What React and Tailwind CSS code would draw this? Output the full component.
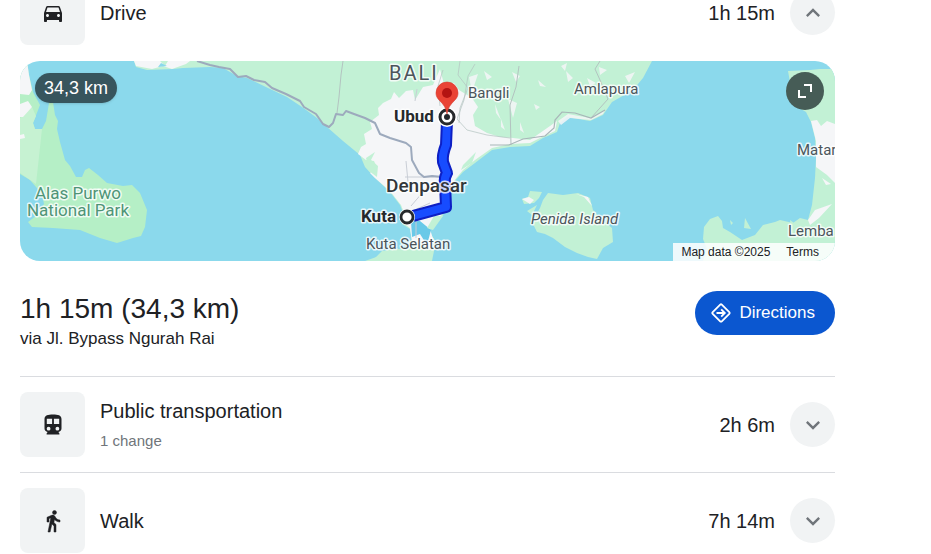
import React, { useState } from "react";
import { MdDirectionsCar, MdExpandLess, MdExpandMore } from "react-icons/md";

const WATER = "#8bd9ec";
const GREEN = "#c2f1d5";
const PARK = "#b5efc6";
const TOWN = "#f5f6f8";

// ─── Map labels ───────────────────────────────────────────────────────────────
const LABELS = [
  { text: "Bangli", x: 448, y: 37, className: "text-[15px] fill-[#4b555b]" },
  { text: "Amlapura", x: 554, y: 33, className: "text-[15px] fill-[#4b555b]" },
  { text: "Kuta Selatan", x: 346, y: 188, className: "text-[15px] fill-[#4b555b]" },
  { text: "Matar", x: 777, y: 94, className: "text-[15px] fill-[#4b555b]" },
  { text: "Lemba", x: 768, y: 175, className: "text-[15px] fill-[#4b555b]" },
  { text: "Penida Island", x: 511, y: 163, className: "text-[15px] italic fill-[#4b555b]" },
  { text: "BALI", x: 369, y: 19, className: "text-[20px] tracking-widest fill-[#4b555b]" },
  { text: "Denpasar", x: 366, y: 131, className: "text-[19px] font-medium fill-[#33373b]" },
  { text: "Ubud", x: 374, y: 61, className: "text-[17px] font-bold fill-[#26292c]" },
  { text: "Kuta", x: 341, y: 161, className: "text-[17px] font-bold fill-[#26292c]" },
];

const HALO = {
  stroke: "#ffffff",
  strokeOpacity: 0.8,
  strokeWidth: 3,
  strokeLinejoin: "round",
  paintOrder: "stroke",
};

const ROUTE = "M427 60 L426 84 Q422 94 423 101 L427 112 Q424 117 425 122 L426 146 L393 155";

// ─── Map drawing ──────────────────────────────────────────────────────────────
const RouteMap = () => (
  <svg
    viewBox="0 0 815 200"
    preserveAspectRatio="xMidYMid slice"
    role="img"
    aria-label="Route from Kuta to Ubud"
    className="block w-full h-[200px] font-[Roboto,sans-serif]"
  >
    <rect width="815" height="200" fill={WATER} />

    {/* Java, Alas Purwo */}
    <path
      d="M0 0H7L9 14L13 31L20 44L13 62L15 68L22 68L26 60L29 42L33 41L35 54L38 60L37 68L40 81L45 99L50 105L56 116L62 116L65 109L69 107L78 114L87 122L103 125L112 124L120 132L127 149L125 166L121 175L113 177L97 182L80 177L60 169L33 167L12 166L8 161L16 155L24 143L22 133L10 119L0 113Z"
      fill={PARK}
    />
    <path d="M0 57L12 46L16 55L13 62L15 68L22 68L16 123L0 112Z" fill="#c6f2d2" />
    <path d="M0 0H7L9 14L12 29L9 34L0 33Z M0 43L8 40L12 46L3 56H0Z M0 74L4 73L5 77L0 78Z" fill={TOWN} />

    {/* Bali */}
    <path
      d="M114 0L116 6L127 9L153 8L163 7L190 6L203 7L217 15L227 17L248 27L267 36L282 46L297 57L307 66L323 80L340 94L345 106L355 117L370 131L380 144L385 157L382 163L390 168L392 181L385 187L372 189L362 194L345 200H412L414 190L415 180L408 168L422 156L428 144L433 122L443 111L455 102L472 89L490 86L510 85L523 77L537 71L540 62L547 56L570 60L583 54L592 41L613 29L623 17L632 0Z"
      fill={GREEN}
    />
    <path d="M114 0L116 5L132 8L143 5L152 8L166 3L170 0H148L145 5L140 0Z" fill={TOWN} />
    <path d="M141 2L147 5L138 6Z" fill={WATER} />
    <path
      d="M338 93L341 86L346 83L344 73L352 68L350 61L359 54L358 47L363 42L371 38L374 31L379 37L386 30L393 29L395 39L403 26L413 24L420 8L424 23L434 22L439 29L452 37L458 46L453 54L455 65L467 72L480 76L493 77L510 79L530 65L537 60L535 70L522 76L510 82L490 83L472 87L455 99L443 109L433 121L427 145L421 155L410 168L414 181L410 189L400 182L390 186L392 180L390 167L383 162L386 157L381 144L370 130L355 117L350 112L357 107L354 100L346 99Z"
      fill={TOWN}
    />
    <path d="M346 97L355 91L351 99L358 105L357 116L349 110Z M362 190L374 188L385 191L376 200H352Z M443 104L456 91L452 102L441 109Z M462 50L466 58L460 60Z" fill={GREEN} />
    <path d="M391 160L400 160L411 169L407 184L400 173L392 176Z" fill="#69c9e8" />
    <path d="M407 167L414 155L423 155L413 169Z" fill={GREEN} />
    <g fill={TOWN} opacity="0.85">
      <path d="M449 16L458 13L454 25L461 33L452 31Z M464 10L472 16L467 19Z M488 38L497 42L493 57Z M475 43L481 59L476 52Z M492 11L500 15L496 21Z M518 19L526 26L520 25Z M468 29L475 36L465 36Z M546 10L553 17L548 21Z M579 6L587 9L580 14Z M605 15L615 11L609 22Z M541 5L547 2L545 10Z M514 43L520 46L516 49Z M481 58L485 69L481 66Z M500 61L504 72L500 69Z M567 17L576 22L570 25Z" />
      <path d="M538 60L548 53L570 57L585 49L583 53L571 59L550 57L541 64Z" />
    </g>

    {/* minor roads */}
    <g fill="none" stroke="#b3c3c0" strokeWidth="1">
      <path d="M323 0L321 14L319 36L317 52" />
      <path d="M423 9L418 25L420 45M440 0L438 14L448 27L440 47L439 62" opacity="0.7" />
      <path d="M455 3L448 15L444 39L437 58L447 69L467 74L490 77" opacity="0.7" />
      <path d="M499 5L496 26L490 44L491 84" />
      <path d="M580 0L575 8L580 19L588 38L571 57" />
      <path d="M385 116H423M386 100L388 121M410 142L390 151M397 28L395 40" stroke="#c9ced6" />
      <path d="M391 145L409 124M396 160V177" stroke="#c9ced6" />
    </g>
    <path d="M470 84L489 84L503 78L525 75L534 67L535 59L542 51L555 52L571 57L585 49" fill="none" stroke="#a8b6b8" strokeWidth="1.2" />

    {/* coastal highway */}
    <path
      d="M177 0L190 4L199 6L210 8L218 16L226 15L234 19L245 21L252 27L266 33L280 40L284 46L296 53L303 63L309 66L313 62L316 53L323 54L326 50L334 53L345 57L355 62L360 73L370 77L386 82L391 86L392 99L399 112L404 116L412 115L423 116"
      fill="none"
      stroke="#9daabd"
      strokeWidth="2"
      strokeLinejoin="round"
    />

    {/* Penida Island */}
    <path d="M528 132L543 134L558 132L570 137L573 149L580 157L592 167L593 181L583 187L577 198L568 196L557 192L545 186L533 177L525 173L517 171L512 161L520 147L523 139Z" fill={GREEN} />
    <path d="M502 138L508 136L510 130L522 131L519 137L514 142L504 143Z M507 150L517 144L512 154Z" fill={GREEN} />
    <path d="M502 138L509 136L514 139L510 143Z M556 133L568 136L572 145L564 136Z" fill={TOWN} />

    {/* Lombok */}
    <path d="M768 10L790 9L800 8L815 8V200H683L687 188L683 178L684 166L690 158L698 155L702 160L703 167L710 171L722 179L735 174L743 164L755 161L760 159L773 162L780 157L788 159L792 144L795 117L796 97L795 77L791 61L786 51L774 44Z" fill={GREEN} />
    <path d="M791 60L797 59L801 65L807 60L815 63V122L807 114L796 106L796 80Z M788 159L795 149L812 143L799 157L790 164Z M802 117L811 123L806 124Z" fill={TOWN} />
    <path d="M725 157L731 168L724 167Z M710 159L713 162L711 164Z M770 159L774 162L771 170Z" fill={GREEN} />

    {/* route */}
    <g fill="none" strokeLinejoin="round">
      <path d={ROUTE} stroke="#0d1fc4" strokeWidth="12" />
      <path d={ROUTE} stroke="#174cff" strokeWidth="8" />
    </g>

    {LABELS.map((label) => (
      <text key={label.text} x={label.x} y={label.y} className={label.className} {...HALO}>
        {label.text}
      </text>
    ))}
    <text className="text-[17px] fill-[#4f9477]" textAnchor="middle" {...HALO}>
      <tspan x="58" y="138">Alas Purwo</tspan>
      <tspan x="58" y="155">National Park</tspan>
    </text>

    {/* stops */}
    <circle cx="387" cy="156" r="8" fill="#fff" />
    <circle cx="387" cy="156" r="6" fill="#fff" stroke="#26292c" strokeWidth="2.8" />
    <circle cx="427" cy="56" r="10" fill="#fff" />
    <circle cx="427" cy="56" r="7" fill="#fff" stroke="#26292c" strokeWidth="3" />
    <circle cx="427" cy="56" r="3" fill="#26292c" />
    <path
      d="M427 53C426 47 424 44 420 40C417 37 416 35 416 32A11 11 0 0 1 438 32C438 35 437 37 434 40C430 44 428 47 427 53Z"
      fill="#ea4335"
      stroke="#d33b2e"
      strokeWidth="0.6"
    />
    <circle cx="427" cy="32" r="5" fill="#b31412" />
  </svg>
);

// ─── Icons ────────────────────────────────────────────────────────────────────
const TrainIcon = ({ className }) => (
  <svg viewBox="0 0 24 24" className={className} fill="currentColor" aria-hidden="true">
    <path
      fillRule="evenodd"
      d="M12 1.5C7 1.5 3.5 2.2 3.5 6V15.5C3.5 17.3 4.8 18.8 6.6 19L5.6 20.4V21.5H18.4V20.4L17.4 19C19.2 18.8 20.5 17.3 20.5 15.5V6C20.5 2.2 17 1.5 12 1.5ZM5.8 5.8H11.1V11H5.8ZM12.9 5.8H18.2V11H12.9ZM7.6 13.8A1.9 1.9 0 1 1 7.6 17.6A1.9 1.9 0 1 1 7.6 13.8ZM16.4 13.8A1.9 1.9 0 1 1 16.4 17.6A1.9 1.9 0 1 1 16.4 13.8Z"
    />
  </svg>
);

const WalkIcon = ({ className }) => (
  <svg viewBox="0 0 24 24" className={className} fill="currentColor" stroke="currentColor" strokeWidth="0.5" aria-hidden="true">
    <circle cx="13.5" cy="3.5" r="2" />
    <path d="M9.8 8.9L7 23h2.1l1.8-8 2.1 2v6h2v-7.5l-2.1-2 .6-3C14.8 12 16.8 13 19 13v-2c-1.9 0-3.5-1-4.3-2.4l-1-1.6c-.4-.6-1-1-1.7-1-.3 0-.5.1-.8.1L6 8.3V13h2V9.6l1.8-.7Z" />
  </svg>
);

const DirectionsIcon = () => (
  <svg viewBox="0 0 20 20" className="w-5 h-5" fill="none" stroke="currentColor" strokeWidth="1.8" aria-hidden="true">
    <path d="M9.2 1.7Q10 .9 10.8 1.7L18.3 9.2Q19.1 10 18.3 10.8L10.8 18.3Q10 19.1 9.2 18.3L1.7 10.8Q.9 10 1.7 9.2Z" strokeLinejoin="round" />
    <path d="M5.5 10H13.5M10.2 6.4L13.8 10L10.2 13.6" />
  </svg>
);

const ExpandIcon = () => (
  <svg viewBox="0 0 14 14" className="w-3.5 h-3.5" fill="none" stroke="currentColor" strokeWidth="2" aria-hidden="true">
    <path d="M6 1H13V8M1 6V13H8" />
  </svg>
);

// ─── One travel mode ──────────────────────────────────────────────────────────
const ModeRow = ({ icon: Icon, title, note, duration, open, onToggle }) => {
  const Chevron = open ? MdExpandLess : MdExpandMore;
  return (
    <div className="flex items-center gap-[15px]">
      <div className="flex items-center justify-center shrink-0 w-[65px] h-[65px] rounded-lg bg-[#f1f3f4]">
        <Icon className="w-6 h-6" />
      </div>
      <div className="flex-1 min-w-0">
        <h3 className="text-xl leading-7">{title}</h3>
        {note && <p className="mt-1 text-[15px] leading-6 text-[#70757a]">{note}</p>}
      </div>
      <span className="text-xl leading-7">{duration}</span>
      <button
        type="button"
        aria-label={`${title} details`}
        aria-expanded={open}
        onClick={onToggle}
        className="flex items-center justify-center shrink-0 w-[45px] h-[45px] rounded-full bg-[#f1f3f4] text-[#70757a] cursor-pointer"
      >
        <Chevron className="w-7 h-7" />
      </button>
    </div>
  );
};

const OTHER_MODES = [
  { id: "transit", icon: TrainIcon, title: "Public transportation", note: "1 change", duration: "2h 6m" },
  { id: "walk", icon: WalkIcon, title: "Walk", duration: "7h 14m" },
];

const App = () => {
  const [openMode, setOpenMode] = useState("drive");
  const toggle = (id) => setOpenMode((v) => (v === id ? null : id));

  return (
    <div className="h-screen overflow-hidden bg-white text-[#202124] font-['Liberation_Sans',Arial,sans-serif]">
      <main className="ml-5 mr-24 -mt-5">
        <ModeRow
          icon={MdDirectionsCar}
          title="Drive"
          duration="1h 15m"
          open={openMode === "drive"}
          onToggle={() => toggle("drive")}
        />

        {openMode === "drive" && (
          <section>
            <div className="relative mt-4 rounded-[20px] overflow-hidden">
              <RouteMap />
              <span className="absolute left-[15px] top-3 px-[9px] rounded-full bg-[#37555d] text-white text-lg leading-[30px] shadow">
                34,3 km
              </span>
              <button
                type="button"
                aria-label="Expand map"
                className="absolute right-[11px] top-[11px] flex items-center justify-center w-[38px] h-[38px] rounded-full bg-[#465c56] text-white cursor-pointer"
              >
                <ExpandIcon />
              </button>
              <div className="absolute right-0 bottom-0 flex gap-4 pl-2 pr-4 bg-white/85 text-xs leading-[18px]">
                <span>Map data ©2025</span>
                <a href="#terms">Terms</a>
              </div>
            </div>

            <div className="flex items-start justify-between mt-[30px] mb-[26px]">
              <div>
                <h2 className="text-[28px] leading-9">1h 15m (34,3 km)</h2>
                <p className="text-[17px] leading-[23px]">via Jl. Bypass Ngurah Rai</p>
              </div>
              <button
                type="button"
                className="flex items-center gap-2 h-11 pl-4 pr-5 rounded-full bg-[#0b57d0] text-white text-[17px] cursor-pointer"
              >
                <DirectionsIcon />
                Directions
              </button>
            </div>
          </section>
        )}

        {OTHER_MODES.map(({ id, ...mode }) => (
          <div key={id} className="border-t border-[#dadce0] py-[15px]">
            <ModeRow {...mode} open={openMode === id} onToggle={() => toggle(id)} />
          </div>
        ))}
      </main>
    </div>
  );
};

export default App;
